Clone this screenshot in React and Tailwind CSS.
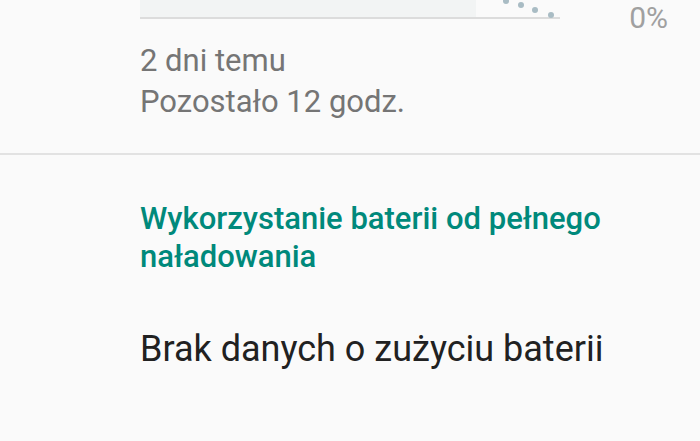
import React from 'react'

const Chart = () => (
  <svg width="422" height="20" viewBox="0 0 422 20" className="block">
    <rect x="0" y="0" width="336" height="17" fill="#f2f4f4" />
    <line x1="0" y1="18" x2="420" y2="18" stroke="#dcdcdc" strokeWidth="2" />
    {[[366, 1], [381, 5], [395, 10], [411, 15]].map(([cx, cy], i) => (
      <circle key={i} cx={cx} cy={cy} r="3" fill="#a9bcc4" />
    ))}
  </svg>
)

const App = () => {
  return (
    <div className="min-h-screen bg-[#fafafa] font-['Roboto',sans-serif] overflow-hidden">
      <div className="pl-[140px] pr-[32px]">
        <div className="flex items-start">
          <Chart />
          <span className="ml-auto mt-[3px] text-[30px] leading-none text-[#a0a0a0]">0%</span>
        </div>
        <div className="pt-[7px] pb-[31px] text-[31px] leading-[41px] text-[#757575]">
          <p>2 dni temu</p>
          <p>Pozostało 12 godz.</p>
        </div>
      </div>
      <div className="border-t-2 border-[#e2e2e2]" />
      <div className="pl-[140px] pr-[32px] pt-[45px]">
        <h2 className="text-[31px] leading-[38px] font-medium text-[#00897b]">
          Wykorzystanie baterii od pełnego
          <br />
          naładowania
        </h2>
        <p className="mt-[53px] text-[36px] leading-[40px] text-[#212121]">Brak danych o zużyciu baterii</p>
      </div>
    </div>
  )
}

export default App
